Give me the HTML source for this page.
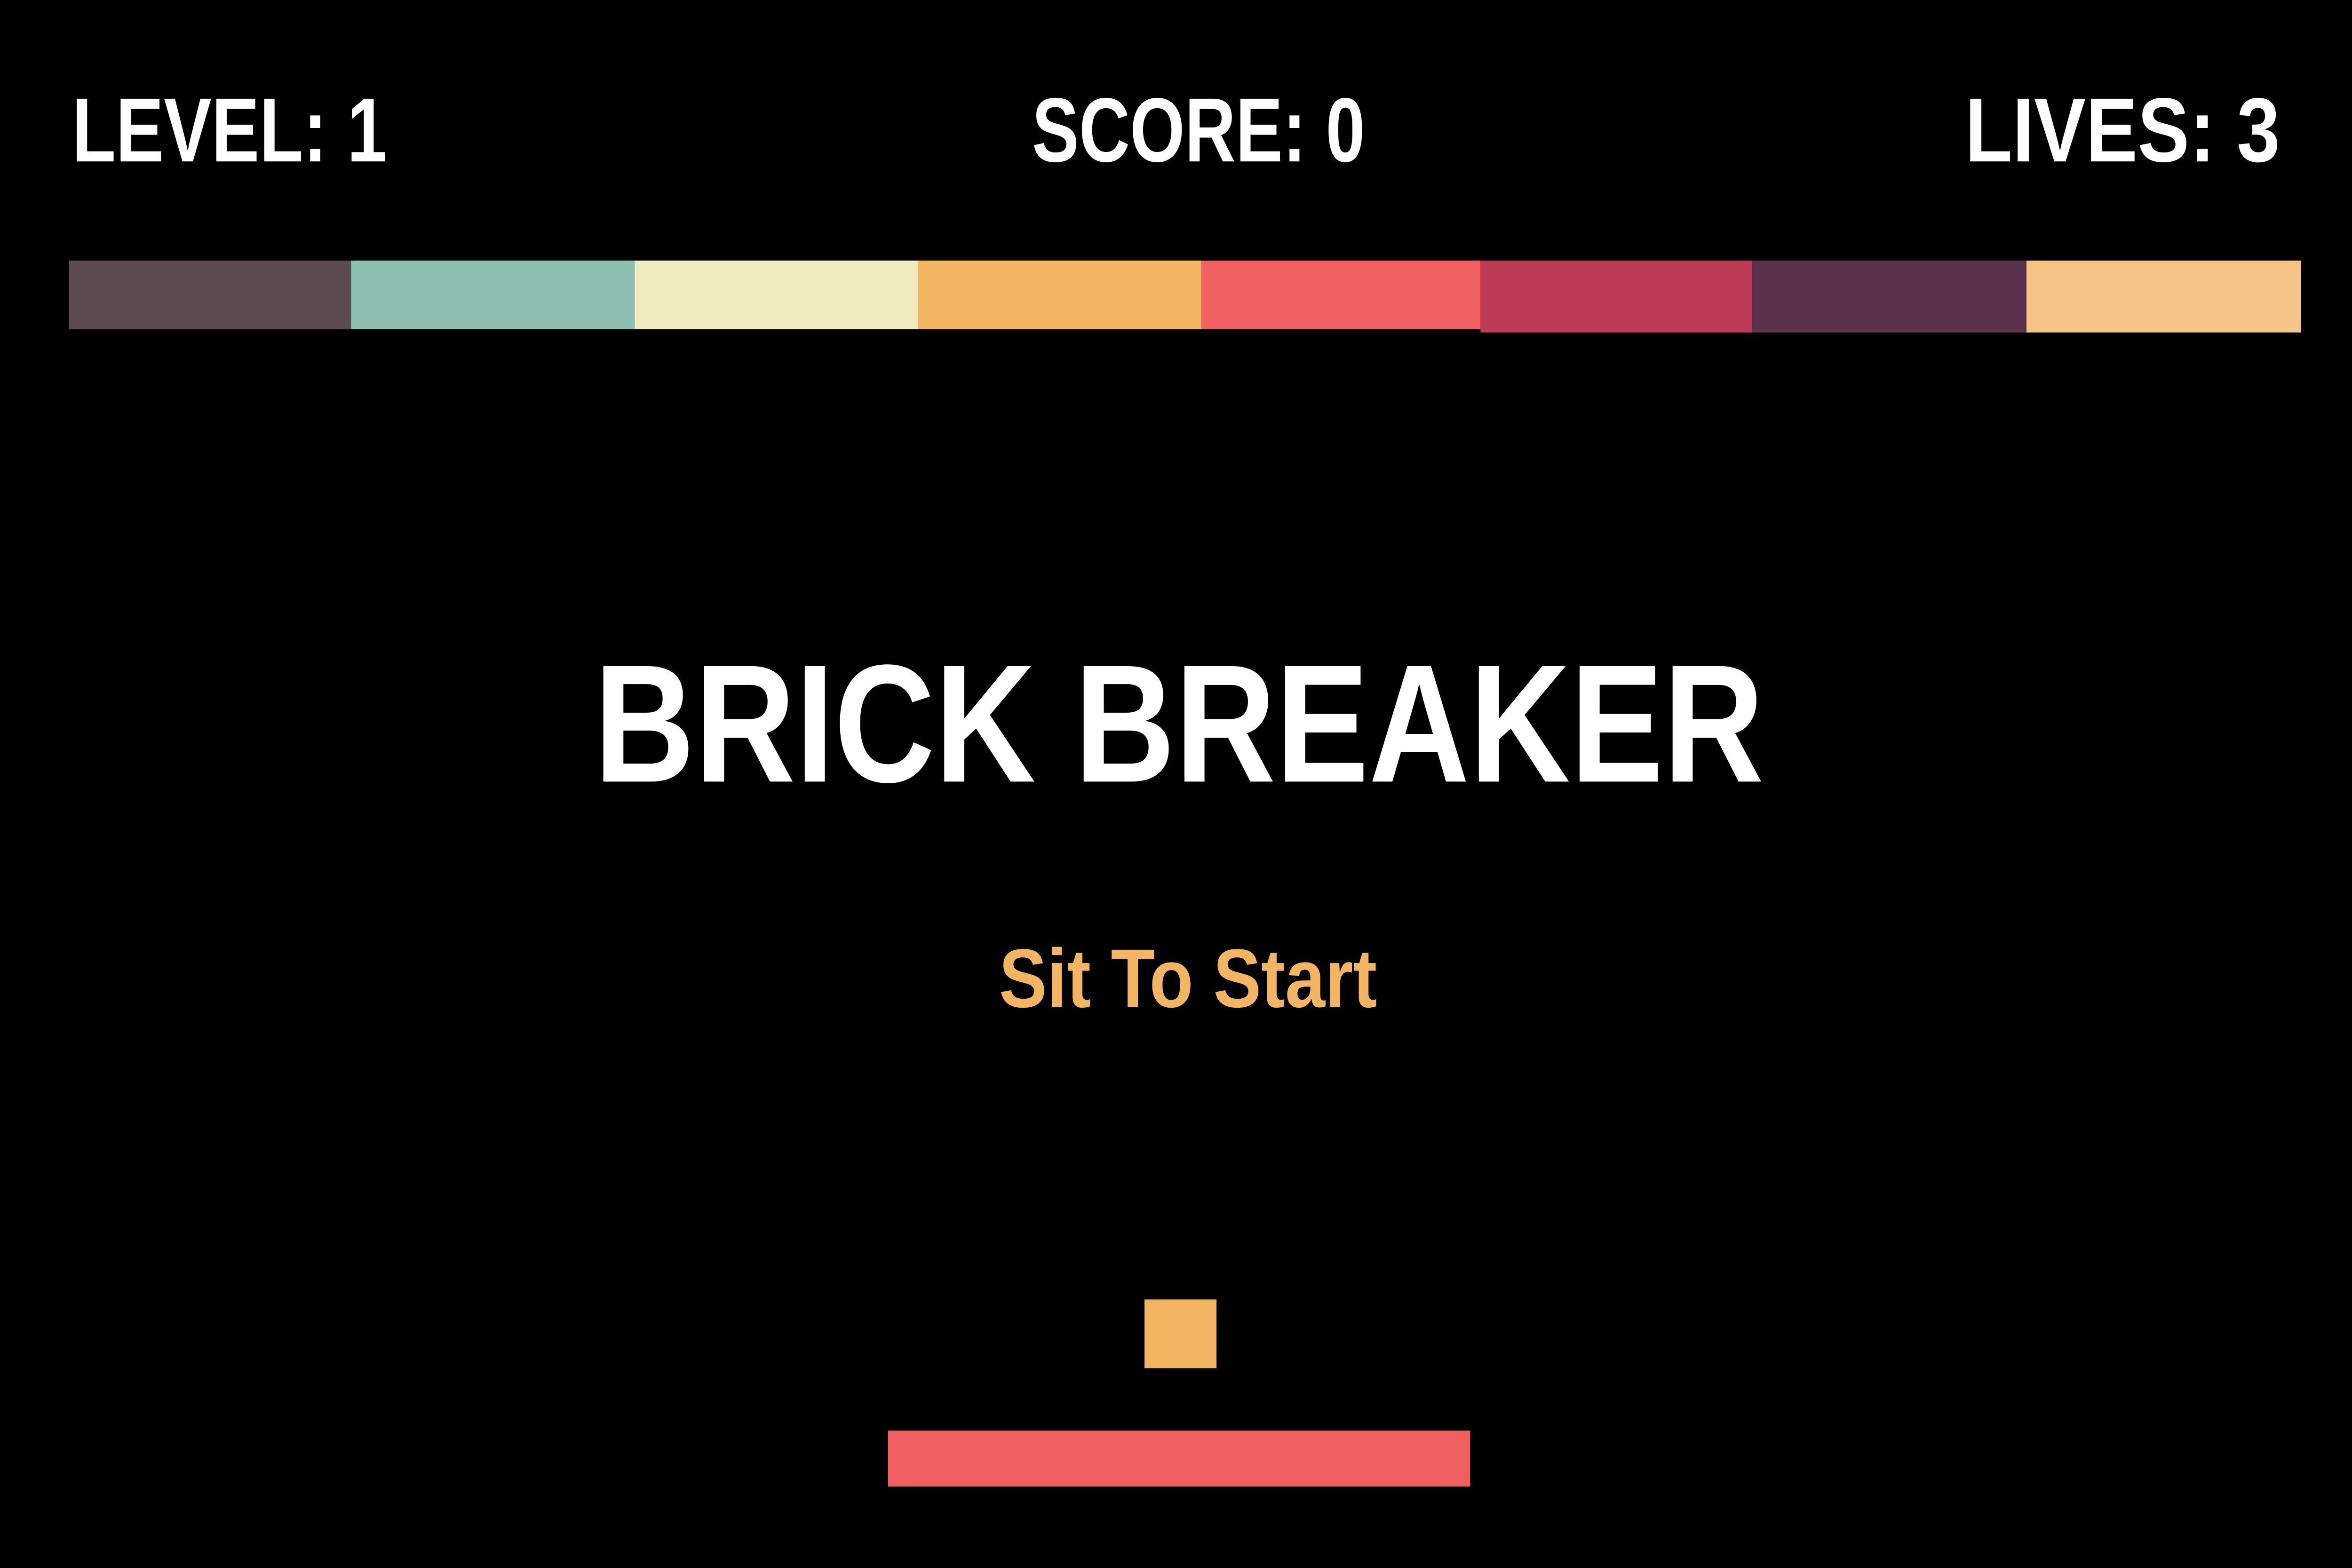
<!DOCTYPE html>
<html><head><meta charset="utf-8"><style>
html,body{margin:0;padding:0;background:#000;width:100%;height:100%;overflow:hidden;}
svg{display:block;width:100vw;height:100vh;position:fixed;left:0;top:0}
</style></head><body>
<svg viewBox="0 0 1568 981" preserveAspectRatio="none" xmlns="http://www.w3.org/2000/svg">
<rect width="1568" height="981" fill="#000"/>
<g font-family="Liberation Sans, sans-serif" font-weight="bold" fill="#fff">
<text x="48" y="101" font-size="57" textLength="210" lengthAdjust="spacingAndGlyphs">LEVEL: 1</text>
<text x="688" y="101" font-size="57" textLength="222" lengthAdjust="spacingAndGlyphs">SCORE: 0</text>
<text x="1310" y="101" font-size="57" textLength="210" lengthAdjust="spacingAndGlyphs">LIVES: 3</text>
<text x="396" y="489" font-size="105" textLength="780" lengthAdjust="spacingAndGlyphs">BRICK BREAKER</text>
<text x="666" y="630" font-size="52" fill="#f3b562" textLength="252" lengthAdjust="spacingAndGlyphs">Sit To Start</text>
</g>
<rect x="46" y="163" width="188" height="43" fill="#5c4b51"/>
<rect x="234" y="163" width="189" height="43" fill="#8cbeb2"/>
<rect x="423" y="163" width="189" height="43" fill="#f2ebbf"/>
<rect x="612" y="163" width="189" height="43" fill="#f3b562"/>
<rect x="801" y="163" width="186" height="43" fill="#f06060"/>
<rect x="987" y="163" width="181" height="45" fill="#be3b57"/>
<rect x="1168" y="163" width="183" height="45" fill="#5c314d"/>
<rect x="1351" y="163" width="183" height="45" fill="#f5c486"/>
<rect x="763" y="813" width="48" height="43" fill="#f3b562"/>
<rect x="592" y="895" width="388" height="35" fill="#f06060"/>
</svg>
</body></html>
